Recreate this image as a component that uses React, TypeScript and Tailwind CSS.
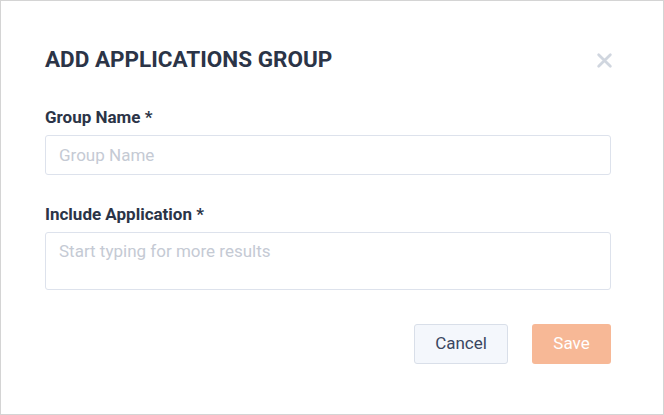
import React from "react";

const App = () => {
  return (
    <div
      className="w-[664px] h-[415px] bg-white border border-[#d4d4d4] box-border"
      style={{ fontFamily: "Roboto, 'Liberation Sans', sans-serif" }}
    >
      <div className="pl-[44px] pr-[52px] pt-[45px]">
        <div className="flex items-start justify-between">
          <h2 className="text-[22.5px] leading-[26px] font-bold text-[#2b3447]">
            ADD APPLICATIONS GROUP
          </h2>
          <button className="mt-[6px] mr-[-2px] text-[#d0d6df]">
            <svg width="17" height="17" viewBox="0 0 16 16">
              <path d="M2.5 2.5 L13.5 13.5 M13.5 2.5 L2.5 13.5" stroke="currentColor" strokeWidth="2.6" strokeLinecap="round" />
            </svg>
          </button>
        </div>

        <label className="block mt-[35px] text-[17px] leading-[20px] font-bold text-[#2b3447]">
          Group Name *
        </label>
        <input
          placeholder="Group Name"
          className="mt-[8px] w-full h-[40px] px-[13px] border border-[#dde2ec] rounded-[3px] text-[17px] text-[#2b3447] placeholder:text-[#c5cad4] outline-none"
        />

        <label className="block mt-[29px] text-[17px] leading-[20px] font-bold text-[#2b3447]">
          Include Application *
        </label>
        <textarea
          placeholder="Start typing for more results"
          className="mt-[8px] block w-full h-[58px] px-[13px] pt-[8px] border border-[#dde2ec] rounded-[3px] text-[17px] leading-[20px] text-[#2b3447] placeholder:text-[#c5cad4] outline-none resize-none"
        />

        <div className="flex justify-end gap-[24px] mt-[34px]">
          <button className="w-[94px] h-[40px] bg-[#f4f7fc] border border-[#d9dfe9] rounded-[3px] text-[17px] text-[#3a4660]">
            Cancel
          </button>
          <button className="w-[79px] h-[40px] bg-[#f7b896] rounded-[3px] text-[17px] text-white">
            Save
          </button>
        </div>
      </div>
    </div>
  );
};

export default App;
